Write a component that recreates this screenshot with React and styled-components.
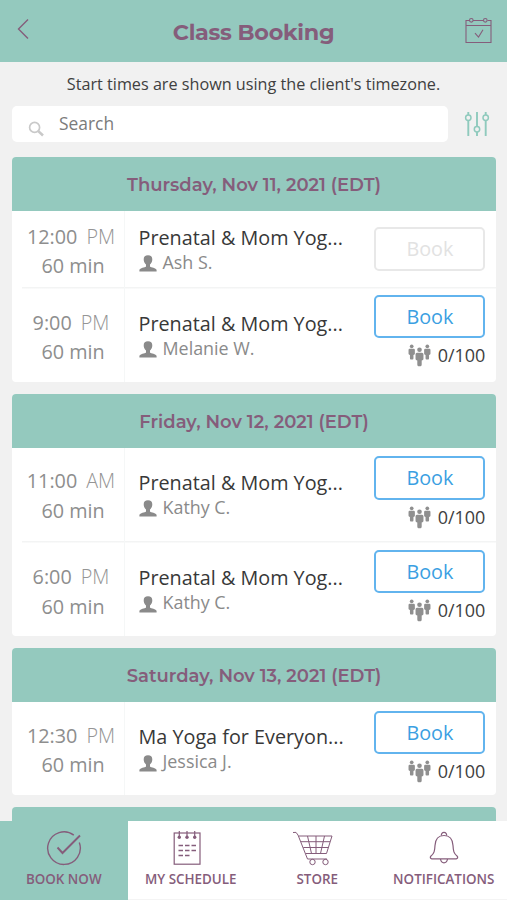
import React from 'react';
import styled, { createGlobalStyle } from 'styled-components';

const GlobalStyle = createGlobalStyle`
  * {
    box-sizing: border-box;
  }

  body {
    margin: 0;
    background: #f1f1f1;
    font-family: 'Open Sans', 'Noto Sans', sans-serif;
    color: #404040;
  }

  svg {
    display: block;
    flex: none;
  }
`;

const Screen = styled.div`
  width: 507px;
  height: 900px;
  display: flex;
  flex-direction: column;
  overflow: hidden;
  background: #f1f1f1;
`;

const Header = styled.header`
  flex: none;
  height: 61.5px;
  padding: 0 14px 0 17px;
  display: flex;
  justify-content: space-between;
  align-items: center;
  background: #94c9be;
  color: #855d7b;

  svg:first-child {
    margin-bottom: 4px;
  }
`;

const Title = styled.h1`
  margin: 3px 0 0 13px;
  font-family: Montserrat, Inter, sans-serif;
  font-size: 22.3px;
  line-height: 30px;
  font-weight: 700;
  letter-spacing: -0.3px;
`;

const Notice = styled.p`
  flex: none;
  margin: 0;
  height: 44.5px;
  line-height: 44px;
  text-align: center;
  font-size: 16.2px;
  white-space: nowrap;
`;

const SearchBar = styled.div`
  flex: none;
  height: 36px;
  margin: 0 17px 15px 12px;
  display: flex;
  justify-content: space-between;
  align-items: center;
  color: #8fcabd;
`;

const SearchField = styled.div`
  width: 435.5px;
  height: 36px;
  padding-left: 16px;
  display: flex;
  align-items: center;
  gap: 15px;
  border-radius: 5px;
  background: #fff;
  font-size: 17.4px;
  line-height: 35px;
  color: #7b7b7b;

  span {
    height: 36px;
  }

  svg {
    margin-top: 9px;
  }
`;

const List = styled.main`
  flex: 1;
  min-height: 0;
  overflow: hidden;
  padding: 0 11px 0 12px;
`;

const Card = styled.section`
  margin-bottom: 12.4px;
  border-radius: 4px;
  overflow: hidden;
  background: #fff;
`;

const DayTitle = styled.h2`
  margin: 0;
  height: 54px;
  line-height: 56px;
  text-align: center;
  background: #94c9be;
  color: #855d7b;
  font-family: Montserrat, Inter, sans-serif;
  font-size: 18px;
  font-weight: 650;
`;

const Row = styled.div`
  height: ${(props) => props.$height}px;
  display: flex;
  background: ${(props) => (props.$line
    ? 'linear-gradient(#f3f4f4, #f3f4f4) 10px 0 / 100% 1.5px no-repeat'
    : 'none')};
`;

const Time = styled.div`
  width: 113px;
  padding-top: ${(props) => props.$top}px;
  border-right: 1.5px solid #f5f7f7;
  text-align: center;
  font-size: 19.8px;
  line-height: 29.5px;
  color: #8e8e8e;

  div {
    padding-right: 1px;
  }

  div + div {
    padding-left: 10px;
    padding-right: 0;
  }

  .meridiem {
    margin-left: 9px;
    font-weight: 300;
    color: #959595;
  }

  .clock {
    margin-left: 7px;
  }
`;

const Details = styled.div`
  flex: 1;
  min-width: 0;
  padding-left: 13.5px;
  padding-top: ${(props) => props.$top}px;
  white-space: nowrap;
`;

const ClassName = styled.div`
  font-size: 19.8px;
  line-height: 26px;
  color: #383838;
`;

const Teacher = styled.div`
  display: flex;
  align-items: center;
  gap: 6px;
  height: 23px;
  font-size: 17.9px;
  line-height: 23px;
  color: #8a8a8a;

  svg {
    margin-top: 3px;
  }
`;

const Booking = styled.div`
  width: 111px;
  margin-right: 10.6px;
  padding-top: ${(props) => (props.$closed ? 16 : 8.4)}px;
`;

const BookButton = styled.button`
  display: block;
  width: 111px;
  height: 43.5px;
  padding: 0;
  border: 2px solid ${(props) => (props.disabled ? '#e8e8e8' : '#62b4ee')};
  border-radius: 5px;
  background: #fff;
  color: ${(props) => (props.disabled ? '#e2e2e2' : '#3b9fe2')};
  font-family: inherit;
  font-size: 19.8px;
  line-height: 39.5px;
`;

const Spots = styled.div`
  display: flex;
  justify-content: flex-end;
  align-items: center;
  gap: 7px;
  margin-top: 4px;
  height: 27px;
  font-size: 18px;
  line-height: 27px;
`;

const TabBar = styled.nav`
  flex: none;
  height: 79.5px;
  display: flex;
  background: #fff;
  border-bottom: 1px solid #f4f4f4;
`;

const Tab = styled.div`
  width: ${(props) => (props.$active ? 127.5 : 126.5)}px;
  height: 79.5px;
  padding-top: 9px;
  display: flex;
  flex-direction: column;
  align-items: center;
  background: ${(props) => (props.$active ? '#94c9be' : 'transparent')};
  color: #855d7b;
  font-size: 13.4px;
  font-weight: 600;
  line-height: 20px;
  white-space: nowrap;

  svg {
    margin-bottom: 3.5px;
    margin-right: ${(props) => props.$nudge || 0}px;
  }
`;

const BackIcon = () => (
  <svg width="14" height="22" viewBox="0 0 14 22" fill="none" stroke="currentColor" strokeWidth="1.4">
    <path d="M11 1.5 1.5 11 11 20.5" />
  </svg>
);

const CalendarIcon = () => (
  <svg width="30" height="28" viewBox="0 0 30 28" fill="none" stroke="currentColor" strokeWidth="1.1">
    <path d="M6.5 3.5H3V25.5H28V3.5H24.5M10 3.5H20.5M3 8.5H28M12 16.2 15.5 20 20 12.7" />
    <circle cx="8.3" cy="3.3" r="1.8" />
    <circle cx="22.3" cy="3.3" r="1.8" />
  </svg>
);

const SearchIcon = () => (
  <svg width="16" height="16" viewBox="0 0 16 16" fill="none" stroke="#c9c9c9">
    <circle cx="6.6" cy="6.4" r="5" strokeWidth="1.7" />
    <path d="M10.3 10.1 15 14.5" strokeWidth="2.6" />
  </svg>
);

const FilterIcon = () => (
  <svg width="26" height="26" viewBox="0 0 26 26" fill="none" stroke="currentColor" strokeWidth="1.9">
    <path d="M4.3 1V4M4.3 9.5V25M13 1V15.5M13 21V25M21.7 1V4M21.7 9.5V25" />
    <circle cx="4.3" cy="6.8" r="2.7" strokeWidth="1.5" />
    <circle cx="13" cy="18.3" r="2.7" strokeWidth="1.5" />
    <circle cx="21.7" cy="6.8" r="2.7" strokeWidth="1.5" />
  </svg>
);

const PersonIcon = () => (
  <svg width="18" height="17" viewBox="0 0 18 17" fill="#8a8a8a">
    <path d="M9 .3C6.2.3 4.700 1.500 4.700 4.200c0 2.400.9 4.100 2.300 5.200v2C6 12.600.9 12.500.4 15v1.500h17.200V15c-.5-2.500-5.600-2.400-6.600-3.600v-2c1.400-1.100 2.300-2.800 2.300-5.200C13.300 1.500 11.800.3 9 .3z" />
  </svg>
);

const Figure = (props) => (
  <g transform={`translate(${props.x} ${props.y}) scale(${props.scale})`}>
    <circle cx="0" cy="2.1" r="2.1" />
    <path d="M-2.3 4.8H2.3Q3.6 4.8 3.600 6.200V10.500Q3.600 11.800 2 11.800V15.500Q2 17 1 17H-1Q-2 17-2 15.500V11.800Q-3.600 11.800-3.600 10.500V6.200Q-3.600 4.800-2.3 4.800z" />
  </g>
);

const GroupIcon = () => (
  <svg width="23" height="23" viewBox="0 0 23 23" fill="#8f8f8f">
    <Figure x={3.7} y={0.5} scale={0.88} />
    <Figure x={19.3} y={0.5} scale={0.88} />
    <Figure x={11.5} y={3.5} scale={1.1} />
  </svg>
);

const CheckIcon = () => (
  <svg width="36" height="36" viewBox="0 0 36 36" fill="none" stroke="currentColor">
    <path d="M27.8 5.1A16.3 16.3 0 1 0 33.3 12.5" strokeWidth="1.4" />
    <path d="M11.5 17.5 16.5 23 34 5.5" strokeWidth="1.9" />
  </svg>
);

const ScheduleIcon = () => (
  <svg width="28" height="36" viewBox="0 0 28 36" fill="none" stroke="currentColor">
    <rect x="1.2" y="3" width="25.8" height="31.2" strokeWidth="1.2" />
    <path d="M6.3 1V7M14 1V7M21.7 1V7" strokeWidth="1.2" />
    <path d="M5.5 15.5h4.5M12 15.5h4.5M18.5 15.5H23M5.5 20.5h4.5M12 20.5h4.5M18.5 20.5H23M5.5 25.5h4.5M12 25.5h4.5" strokeWidth="1.4" />
    <g fill="currentColor" stroke="none">
      <circle cx="6.3" cy="7.2" r="1.7" />
      <circle cx="14" cy="7.2" r="1.7" />
      <circle cx="21.7" cy="7.2" r="1.7" />
    </g>
  </svg>
);

const CartIcon = () => (
  <svg width="42" height="36" viewBox="0 0 42 36" fill="none" stroke="currentColor" strokeWidth="1">
    <path d="M1 2.5Q4.5 1 6 5L15.5 29H35M6.8 6H40L34.5 23.5H13.7M9 11.7H38M11.3 17.5H36.3M15.5 6 19.5 23.5M24 6V23.5M32.5 6 28.5 23.5" />
    <circle cx="20.5" cy="32" r="2.7" />
    <circle cx="33.5" cy="32" r="2.7" />
  </svg>
);

const BellIcon = () => (
  <svg width="30" height="36" viewBox="0 0 30 36" fill="none" stroke="currentColor" strokeWidth="1.2">
    <path d="M15 5.5C8 5.5 6.3 10 6 15.5C5.7 21 5.3 23.5 1.8 26.2Q.6 28 2.5 28.8H27.5Q29.4 28 28.2 26.2C24.7 23.5 24.3 21 24 15.5C23.7 10 22 5.5 15 5.5z" />
    <path d="M12.5 5.7A2.6 2.6 0 1 1 17.5 5.7M11.5 29A3.6 5 0 0 0 18.5 29" />
  </svg>
);

const days = [
  {
    title: 'Thursday, Nov 11, 2021 (EDT)',
    classes: [
      { time: '12:00', meridiem: 'PM', name: 'Prenatal & Mom Yog...', teacher: 'Ash S.', closed: true, height: 75.5, top: 10.5 },
      { time: '9:00', meridiem: 'PM', name: 'Prenatal & Mom Yog...', teacher: 'Melanie W.', height: 95, top: 21 },
    ],
  },
  {
    title: 'Friday, Nov 12, 2021 (EDT)',
    classes: [
      { time: '11:00', meridiem: 'AM', name: 'Prenatal & Mom Yog...', teacher: 'Kathy C.', height: 93.5, top: 18.5 },
      { time: '6:00', meridiem: 'PM', name: 'Prenatal & Mom Yog...', teacher: 'Kathy C.', height: 94.5, top: 20.8 },
    ],
  },
  {
    title: 'Saturday, Nov 13, 2021 (EDT)',
    classes: [
      { time: '12:30', meridiem: 'PM', name: 'Ma Yoga for Everyon...', teacher: 'Jessica J.', height: 92.7, top: 18.5 },
    ],
  },
  { title: '', classes: [] },
];

const tabs = [
  { label: 'BOOK NOW', icon: CheckIcon, active: true },
  { label: 'MY SCHEDULE', icon: ScheduleIcon, nudge: 7 },
  { label: 'STORE', icon: CartIcon, nudge: 9 },
  { label: 'NOTIFICATIONS', icon: BellIcon },
];

const ClassRow = ({ item, line }) => (
  <Row $height={item.height} $line={line}>
    <Time $top={item.top}>
      <div>
        <span className='clock'>{item.time}</span>
        <span className='meridiem'>{item.meridiem}</span>
      </div>
      <div>60 min</div>
    </Time>
    <Details $top={item.top + 3.3}>
      <ClassName>{item.name}</ClassName>
      <Teacher>
        <PersonIcon />
        {item.teacher}
      </Teacher>
    </Details>
    <Booking $closed={item.closed}>
      <BookButton disabled={item.closed}>Book</BookButton>
      {item.closed ? null : (
        <Spots>
          <GroupIcon />
          0/100
        </Spots>
      )}
    </Booking>
  </Row>
);

const App = () => {
  return (
    <Screen>
      <GlobalStyle />
      <Header>
        <BackIcon />
        <Title>Class Booking</Title>
        <CalendarIcon />
      </Header>
      <Notice>Start times are shown using the client's timezone.</Notice>
      <SearchBar>
        <SearchField>
          <SearchIcon />
          <span>Search</span>
        </SearchField>
        <FilterIcon />
      </SearchBar>
      <List>
        {days.map((day, i) => (
          <Card key={i}>
            <DayTitle>{day.title}</DayTitle>
            {day.classes.map((item, j) => (
              <ClassRow key={j} item={item} line={j > 0} />
            ))}
          </Card>
        ))}
      </List>
      <TabBar>
        {tabs.map((tab) => (
          <Tab key={tab.label} $active={tab.active} $nudge={tab.nudge}>
            <tab.icon />
            {tab.label}
          </Tab>
        ))}
      </TabBar>
    </Screen>
  )
}

export default App;
